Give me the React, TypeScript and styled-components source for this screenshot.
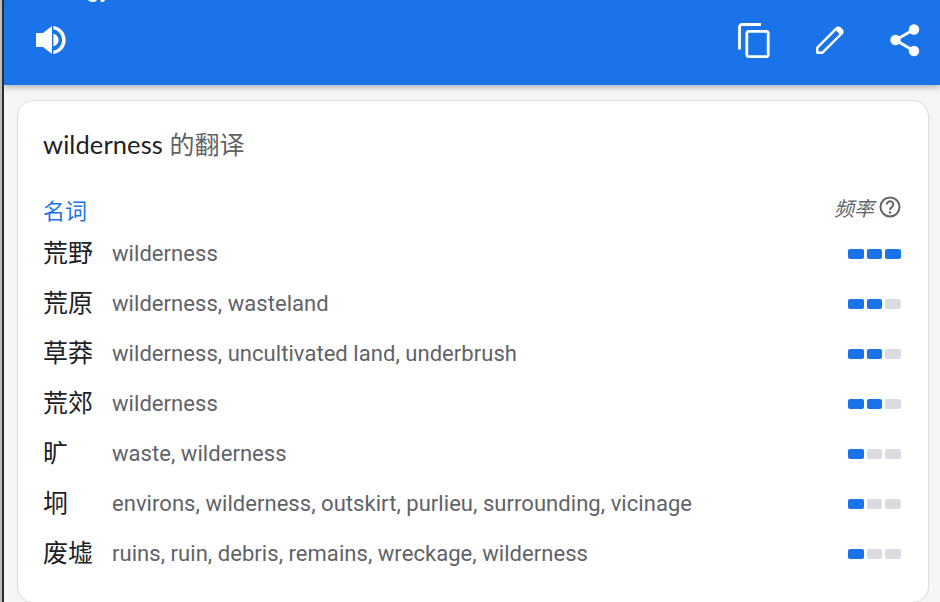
import React from "react";
import styled, { createGlobalStyle } from "styled-components";

const GlobalStyle = createGlobalStyle`
  html, body {
    margin: 0;
    padding: 0;
    background: #f5f5f5;
  }
  body {
    font-family: Roboto, "Noto Sans CJK SC", sans-serif;
  }
`;

const Page = styled.div`
  width: 940px;
  height: 602px;
  overflow: hidden;
  box-sizing: border-box;
  border-left: 2px solid #bdbdbd;
`;

const Surface = styled.div`
  height: 100%;
  box-sizing: border-box;
  border-left: 2px solid #2b2b2b;
  background: #f5f5f5;
`;

const Header = styled.header`
  height: 85px;
  box-sizing: border-box;
  background: #1a73e8;
  box-shadow: 0 2px 6px rgba(60, 64, 67, 0.4);
  overflow: hidden;
  padding: 0 20px 0 31px;
  position: relative;
`;

const ClippedWord = styled.div`
  height: 2px;
  overflow: hidden;
  margin-left: 51px;
  color: #fff;
  font-size: 24px;
  line-height: 24px;
`;

const ClippedText = styled.span`
  display: block;
  margin-top: -23px;
`;

const HeaderIcons = styled.div`
  display: flex;
  align-items: center;
  justify-content: space-between;
  height: 76px;
`;

const RightIcons = styled.div`
  display: flex;
  align-items: center;
  gap: 46px;
`;

const Card = styled.section`
  margin: 15px 0 0 13px;
  width: 912px;
  height: 503px;
  box-sizing: border-box;
  background: #fff;
  border: 1px solid #dadce0;
  border-radius: 16px;
  padding: 26px 27px 0 25px;
`;

const Title = styled.h2`
  margin: 0;
  font-family: Lato, "Noto Sans CJK SC", sans-serif;
  font-size: 25px;
  line-height: 34px;
  font-weight: 400;
  color: #5f6368;
`;

const TitleWord = styled.span`
  color: #202124;
  font-size: 25.5px;
  letter-spacing: 0.1px;
`;

const SectionHead = styled.div`
  display: flex;
  justify-content: space-between;
  align-items: center;
  margin-top: 32px;
  height: 35px;
`;

const PartOfSpeech = styled.span`
  color: #1a73e8;
  font-size: 22px;
  margin-bottom: 3px;
`;

const FrequencyLabel = styled.span`
  display: flex;
  align-items: center;
  gap: 5px;
  color: #5f6368;
  font-size: 20px;
  font-style: italic;
  margin-bottom: 7px;
`;

const Row = styled.div`
  display: flex;
  align-items: center;
  height: 50px;
`;

const Term = styled.span`
  width: 69px;
  flex: none;
  color: #202124;
  font-size: 25px;
  padding-bottom: 5px;
`;

const Meanings = styled.span`
  flex: 1;
  color: #5f6368;
  font-size: 22px;
  letter-spacing: 0.05px;
`;

const Meter = styled.div`
  display: flex;
  gap: 3px;
  margin-top: 2px;
`;

const Pip = styled.span<{ $on: boolean }>`
  width: 15.67px;
  height: 10px;
  border-radius: 2px;
  background: ${(p) => (p.$on ? "#1a73e8" : "#dadce0")};
`;

const rows: [string, string, number][] = [
  ["荒野", "wilderness", 3],
  ["荒原", "wilderness, wasteland", 2],
  ["草莽", "wilderness, uncultivated land, underbrush", 2],
  ["荒郊", "wilderness", 2],
  ["旷", "waste, wilderness", 1],
  ["坰", "environs, wilderness, outskirt, purlieu, surrounding, vicinage", 1],
  ["废墟", "ruins, ruin, debris, remains, wreckage, wilderness", 1],
];

const SpeakerIcon = () => (
  <svg width="32" height="32" viewBox="0 0 32 32" fill="#fff">
    <path d="M1 9h7l9-7v28l-9-7H1z" />
    <path d="M18.300 2c7 .8 12.400 6.800 12.400 14s-5.400 13.200-12.400 14v-3.300c5-.8 8.800-5.300 8.800-10.700s-3.800-9.900-8.800-10.700z" />
    <path d="M18.300 9.500c3 1 5.300 3.500 5.300 6.500s-2.300 5.500-5.300 6.500z" />
  </svg>
);

const CopyIcon = () => (
  <svg width="32" height="35" viewBox="0 0 32 35" fill="none" stroke="#fff" strokeWidth="2.800">
    <path d="M23 1.500H4a2.500 2.500 0 0 0-2.500 2.500v22.500" />
    <rect x="8.800" y="8.300" width="21.400" height="25.400" rx="2" />
  </svg>
);

const PencilIcon = () => (
  <svg width="28" height="28" viewBox="0 0 28 28" fill="none" stroke="#fff" strokeWidth="2.400" strokeLinejoin="round">
    <path d="M1.300 26.700v-5L20.500 2.300a2.400 2.400 0 0 1 3.400 0l1.800 1.800a2.400 2.400 0 0 1 0 3.400L6.500 26.700z" />
    <path d="M21 2.500l4.500 4.500" strokeWidth="4" />
  </svg>
);

const ShareIcon = () => (
  <svg width="30" height="33" viewBox="0 0 30 33" fill="#fff">
    <circle cx="24" cy="5.500" r="5.200" />
    <circle cx="5.500" cy="16" r="5.200" />
    <circle cx="24" cy="27" r="5.200" />
    <path d="M24 5.500L5.500 16 24 27" fill="none" stroke="#fff" strokeWidth="2.800" />
  </svg>
);

const HelpIcon = () => (
  <svg width="22" height="22" viewBox="0 0 22 22" fill="none" stroke="#5f6368" strokeWidth="2">
    <circle cx="11" cy="11" r="9.500" />
    <path d="M7.800 8.500a3.200 3.200 0 1 1 5 2.700c-1.200.8-1.800 1.400-1.800 2.800" />
    <circle cx="11" cy="16.500" r="1.200" fill="#5f6368" stroke="none" />
  </svg>
);

export default function App() {
  return (
    <>
      <GlobalStyle />
      <Page>
        <Surface>
          <Header>
            <ClippedWord>
              <ClippedText>gy</ClippedText>
            </ClippedWord>
            <HeaderIcons>
              <SpeakerIcon />
              <RightIcons>
                <CopyIcon />
                <PencilIcon />
                <ShareIcon />
              </RightIcons>
            </HeaderIcons>
          </Header>
          <Card>
            <Title>
              <TitleWord>wilderness</TitleWord> 的翻译
            </Title>
            <SectionHead>
              <PartOfSpeech>名词</PartOfSpeech>
              <FrequencyLabel>
                频率 <HelpIcon />
              </FrequencyLabel>
            </SectionHead>
            {rows.map(([term, meanings, level]) => (
              <Row key={term}>
                <Term>{term}</Term>
                <Meanings>{meanings}</Meanings>
                <Meter>
                  {[1, 2, 3].map((n) => (
                    <Pip key={n} $on={n <= level} />
                  ))}
                </Meter>
              </Row>
            ))}
          </Card>
        </Surface>
      </Page>
    </>
  );
}
